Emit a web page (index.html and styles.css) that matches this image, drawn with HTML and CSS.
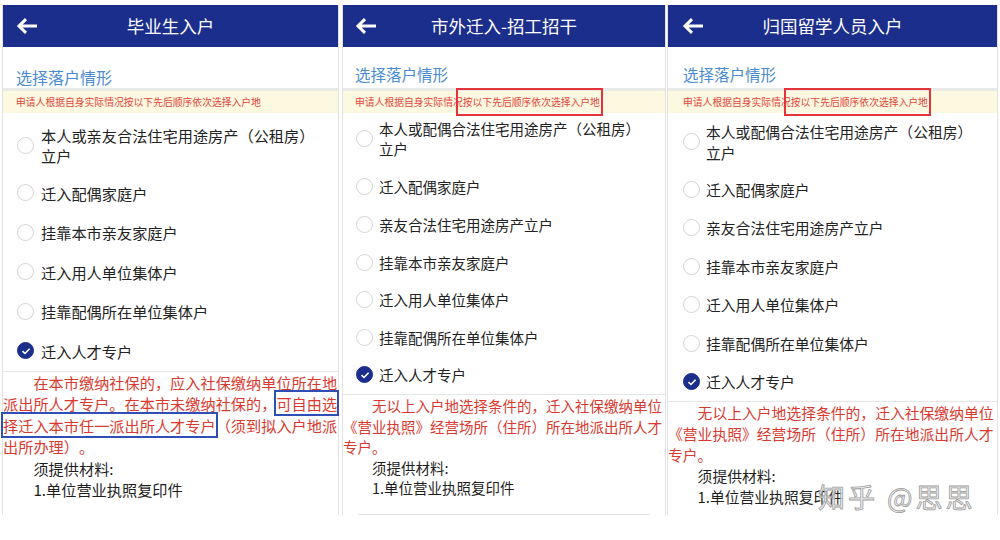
FILE: index.html
```html
<!DOCTYPE html>
<html lang="zh-CN">
<head>
<meta charset="utf-8">
<title>选择落户情形</title>
<link rel="stylesheet" href="styles.css">
</head>
<body>
<div class="board">

  <section class="phone p1">
    <header class="bar">
      <svg class="back" viewBox="0 0 22 16"><path d="M21 8H3M10 1.2L3 8l7 6.8" fill="none" stroke="#fff" stroke-width="3"/></svg>
      <h1>毕业生入户</h1>
    </header>
    <div class="sub">选择落户情形</div>
    <div class="gray"></div>
    <div class="notice">申请人根据自身实际情况按以下先后顺序依次选择入户地</div>
    <div class="opt first"><span class="radio"></span><span class="opt-text">本人或亲友合法住宅用途房产（公租房）立户</span></div>
    <div class="opt"><span class="radio"></span><span class="opt-text">迁入配偶家庭户</span></div>
    <div class="opt"><span class="radio"></span><span class="opt-text">挂靠本市亲友家庭户</span></div>
    <div class="opt"><span class="radio"></span><span class="opt-text">迁入用人单位集体户</span></div>
    <div class="opt"><span class="radio"></span><span class="opt-text">挂靠配偶所在单位集体户</span></div>
    <div class="opt"><span class="radio on"><svg viewBox="0 0 10 8"><path d="M1.5 4.2L4 6.5l4.6-4.8" fill="none" stroke="#fff" stroke-width="1.6"/></svg></span><span class="opt-text">迁入人才专户</span></div>
    <div class="line"></div>
    <p class="note">在本市缴纳社保的，应入社保缴纳单位所在地派出所人才专户。在本市未缴纳社保的，<span class="hl">可自由选</span><span class="hl">择迁入本市任一派出所人才专户</span>（须到拟入户地派出所办理）。</p>
    <p class="need">须提供材料:<br>1.单位营业执照复印件</p>
  </section>

  <section class="phone p2">
    <header class="bar">
      <svg class="back" viewBox="0 0 22 16"><path d="M21 8H3M10 1.2L3 8l7 6.8" fill="none" stroke="#fff" stroke-width="3"/></svg>
      <h1>市外迁入-招工招干</h1>
    </header>
    <div class="sub">选择落户情形</div>
    <div class="gray"></div>
    <div class="notice">申请人根据自身实际情况<span class="mark">按以下先后顺序依次选择入户地</span></div>
    <div class="opt first"><span class="radio"></span><span class="opt-text">本人或配偶合法住宅用途房产（公租房）立户</span></div>
    <div class="opt"><span class="radio"></span><span class="opt-text">迁入配偶家庭户</span></div>
    <div class="opt"><span class="radio"></span><span class="opt-text">亲友合法住宅用途房产立户</span></div>
    <div class="opt"><span class="radio"></span><span class="opt-text">挂靠本市亲友家庭户</span></div>
    <div class="opt"><span class="radio"></span><span class="opt-text">迁入用人单位集体户</span></div>
    <div class="opt"><span class="radio"></span><span class="opt-text">挂靠配偶所在单位集体户</span></div>
    <div class="opt"><span class="radio on"><svg viewBox="0 0 10 8"><path d="M1.5 4.2L4 6.5l4.6-4.8" fill="none" stroke="#fff" stroke-width="1.6"/></svg></span><span class="opt-text">迁入人才专户</span></div>
    <div class="line"></div>
    <p class="note">无以上入户地选择条件的，迁入社保缴纳单位《营业执照》经营场所（住所）所在地派出所人才专户。</p>
    <p class="need">须提供材料:<br>1.单位营业执照复印件</p>
    <div class="foot"></div>
  </section>

  <section class="phone p3">
    <header class="bar">
      <svg class="back" viewBox="0 0 22 16"><path d="M21 8H3M10 1.2L3 8l7 6.8" fill="none" stroke="#fff" stroke-width="3"/></svg>
      <h1>归国留学人员入户</h1>
    </header>
    <div class="sub">选择落户情形</div>
    <div class="gray"></div>
    <div class="notice">申请人根据自身实际情况<span class="mark">按以下先后顺序依次选择入户地</span></div>
    <div class="opt first"><span class="radio"></span><span class="opt-text">本人或配偶合法住宅用途房产（公租房）立户</span></div>
    <div class="opt"><span class="radio"></span><span class="opt-text">迁入配偶家庭户</span></div>
    <div class="opt"><span class="radio"></span><span class="opt-text">亲友合法住宅用途房产立户</span></div>
    <div class="opt"><span class="radio"></span><span class="opt-text">挂靠本市亲友家庭户</span></div>
    <div class="opt"><span class="radio"></span><span class="opt-text">迁入用人单位集体户</span></div>
    <div class="opt"><span class="radio"></span><span class="opt-text">挂靠配偶所在单位集体户</span></div>
    <div class="opt"><span class="radio on"><svg viewBox="0 0 10 8"><path d="M1.5 4.2L4 6.5l4.6-4.8" fill="none" stroke="#fff" stroke-width="1.6"/></svg></span><span class="opt-text">迁入人才专户</span></div>
    <div class="line"></div>
    <p class="note">无以上入户地选择条件的，迁入社保缴纳单位《营业执照》经营场所（住所）所在地派出所人才专户。</p>
    <p class="need">须提供材料:<br>1.单位营业执照复印件</p>
  </section>

</div>
<div class="watermark">知乎 @思思</div>
</body>
</html>
```
FILE: styles.css
```css
* { box-sizing: border-box; margin: 0; padding: 0; }

body {
  margin: 0;
  width: 1000px;
  height: 540px;
  overflow: hidden;
  position: relative;
  background: #fff;
  font-family: "Noto Sans CJK SC", "Noto Sans", sans-serif;
  text-spacing-trim: space-all;
}

.board {
  display: flex;
  align-items: flex-start;
  padding: 5px 0 0 3px;
}

.phone {
  height: 510px;
  display: flex;
  flex-direction: column;
  background: #fff;
  box-shadow: -1px 0 0 #e2e2e2, 1px 0 0 #e2e2e2;
  font-size: var(--fs);
}

.p1 {
  width: 335px; margin-right: 5px;
  --fs: 15.2px; --pad: 13px; --rpad: 14px; --gap: 7px; --row: 39.5px;
  --f-pt: 12px; --f-pb: 8px; --f-lh: 20px;
  --sub-fs: 16px; --sub-pt: 19.5px;
  --red-lh: 21.5px; --red-pt: 0px;
  --arrow: 13px;
}
.p2 {
  width: 322px; margin-right: 3px;
  --fs: 14.5px; --pad: 12px; --rpad: 13px; --gap: 6px; --row: 37.6px;
  --f-pt: 5.5px; --f-pb: 9.7px; --f-lh: 20px;
  --sub-fs: 15.5px; --sub-pt: 16.6px;
  --red-lh: 20.5px; --red-pt: 1.4px;
  --arrow: 12px;
}
.p3 {
  width: 329px;
  --fs: 14.8px; --pad: 15px; --rpad: 15px; --gap: 6px; --row: 38.5px;
  --f-pt: 7.5px; --f-pb: 7.25px; --f-lh: 21px;
  --sub-fs: 15.5px; --sub-pt: 17px;
  --red-lh: 21px; --red-pt: 0.5px;
  --arrow: 14px;
}

/* header bar */
.bar {
  flex: none;
  height: 42px;
  background: #1b2e8c;
  color: #fff;
  display: grid;
  grid-template-columns: 1fr auto 1fr;
  align-items: center;
}
.bar .back {
  width: 22px;
  height: 16px;
  display: block;
  margin-left: var(--arrow);
}
.bar h1 {
  grid-column: 2;
  font-size: 17.5px;
  font-weight: 400;
  line-height: 22px;
  white-space: nowrap;
}

/* subtitle + notice */
.sub {
  flex: none;
  height: 41px;
  padding: var(--sub-pt) 0 0 var(--pad);
  font-size: var(--sub-fs);
  line-height: 20px;
  color: #4b8bd0;
}
.gray { flex: none; height: 3px; background: #e9e9e9; }
.notice {
  flex: none;
  height: 22px;
  padding-left: var(--pad);
  background: #fdf8e0;
  color: #e0453c;
  font-size: 9.8px;
  line-height: 22px;
  white-space: nowrap;
}
.notice .mark {
  outline: 2px solid #e3343a;
  padding: 5px 1px 5px 5px;
  margin-left: -5px;
}

/* options */
.opt {
  flex: none;
  display: flex;
  align-items: center;
  gap: var(--gap);
  height: var(--row);
  padding: 0 20px 0 var(--rpad);
  color: #222;
}
.opt.first {
  height: auto;
  padding-top: var(--f-pt);
  padding-bottom: var(--f-pb);
  line-height: var(--f-lh);
}
.opt-text { flex: 1; min-width: 0; }
.radio {
  flex: none;
  width: 17px;
  height: 17px;
  border-radius: 50%;
  border: 1px solid #d3d3d3;
  background: #fff;
}
.radio.on {
  background: #1b2e8c;
  border-color: #1b2e8c;
  display: flex;
  align-items: center;
  justify-content: center;
}
.radio.on svg { width: 10px; height: 8px; display: block; }

.line { flex: none; height: 1px; background: #e6e6e6; }

/* red explanation */
.note {
  color: #d93a30;
  text-indent: 2em;
  line-height: var(--red-lh);
  padding-top: var(--red-pt);
}
.hl {
  outline: 2px solid #2f4fb4;
}
.need {
  color: #1e1e1e;
  padding-left: 2em;
  line-height: var(--red-lh);
}

.foot {
  margin: auto 15px 0;
  height: 1px;
  background: #e2e2e2;
}

/* watermark overlay */
.watermark {
  position: absolute;
  left: 818px;
  top: 481px;
  font-size: 27px;
  line-height: 32px;
  letter-spacing: 3px;
  color: rgba(235, 235, 235, 0.75);
  -webkit-text-stroke: 0.8px #9c9c9c;
  white-space: nowrap;
}
```
